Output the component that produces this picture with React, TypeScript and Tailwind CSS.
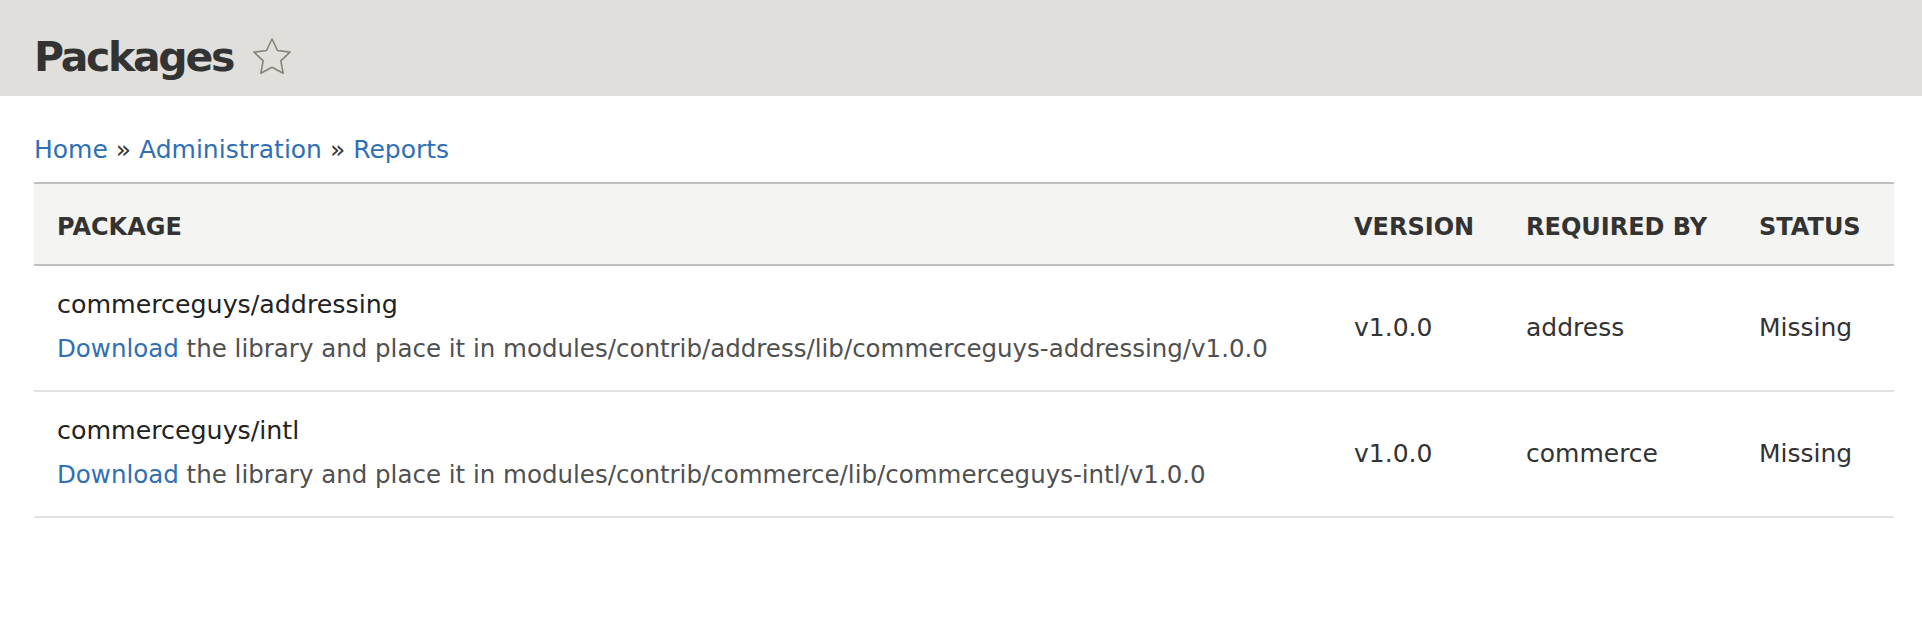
import React from "react";

const rows = [
  {
    name: "commerceguys/addressing",
    path: "modules/contrib/address/lib/commerceguys-addressing/v1.0.0",
    version: "v1.0.0",
    req: "address",
    status: "Missing",
  },
  {
    name: "commerceguys/intl",
    path: "modules/contrib/commerce/lib/commerceguys-intl/v1.0.0",
    version: "v1.0.0",
    req: "commerce",
    status: "Missing",
  },
];

export default function App() {
  return (
    <div className="w-[1922px] h-[640px] bg-white text-[#333] font-['DejaVu_Sans',sans-serif]">
      <div className="h-[96px] bg-[#e0dfdb] flex items-center pl-[34px] pt-[19px] gap-[20px]">
        <h1 className="text-[41px] font-bold text-[#333] leading-none tracking-[-2.3px]">Packages</h1>
        <svg width="38" height="38" viewBox="2.5 2.3 19 19" className="-mt-[2px]">
          <path
            d="M12 2.8l2.75 5.75 6.25.8-4.6 4.35 1.2 6.2L12 16.9 6.4 19.9l1.2-6.2L3 9.35l6.25-.8z"
            fill="none"
            stroke="#858373"
            strokeWidth="0.8"
            strokeLinejoin="round"
          />
        </svg>
      </div>
      <div className="pl-[34px] pt-[36px] h-[86px] text-[25px] leading-[36px]">
        <a className="text-[#2f6fb5]">Home</a>
        <span className="text-[#333]"> » </span>
        <a className="text-[#2f6fb5]">Administration</a>
        <span className="text-[#333]"> » </span>
        <a className="text-[#2f6fb5]">Reports</a>
      </div>
      <div className="ml-[34px] w-[1860px]">
        <table className="w-full border-collapse table-fixed">
          <colgroup>
            <col />
            <col className="w-[172px]" />
            <col className="w-[233px]" />
            <col className="w-[158px]" />
          </colgroup>
          <thead>
            <tr className="bg-[#f4f4f2] border-t-2 border-b-2 border-[#bfbfbf] h-[82px]">
              {["PACKAGE", "VERSION", "REQUIRED BY", "STATUS"].map((h) => (
                <th
                  key={h}
                  className="text-left pl-[23px] pt-[5px] text-[24px] font-bold text-[#333] align-middle"
                >
                  {h}
                </th>
              ))}
            </tr>
          </thead>
          <tbody>
            {rows.map((r) => (
              <tr key={r.name} className="border-b-2 border-[#e2e2e2] text-[25px]">
                <td className="pl-[23px] pt-[21px] pb-[23px] align-middle">
                  <div className="leading-[36px] text-[#222] text-[25.3px]">{r.name}</div>
                  <div className="leading-[36px] mt-[8px] text-[#505050] text-[24.5px]">
                    <a className="text-[#2f6fb5]">Download</a> the library and place it in {r.path}
                  </div>
                </td>
                <td className="pl-[23px] align-middle text-[#333]">{r.version}</td>
                <td className="pl-[23px] align-middle text-[#333]">{r.req}</td>
                <td className="pl-[23px] align-middle text-[#333]">{r.status}</td>
              </tr>
            ))}
          </tbody>
        </table>
      </div>
    </div>
  );
}
